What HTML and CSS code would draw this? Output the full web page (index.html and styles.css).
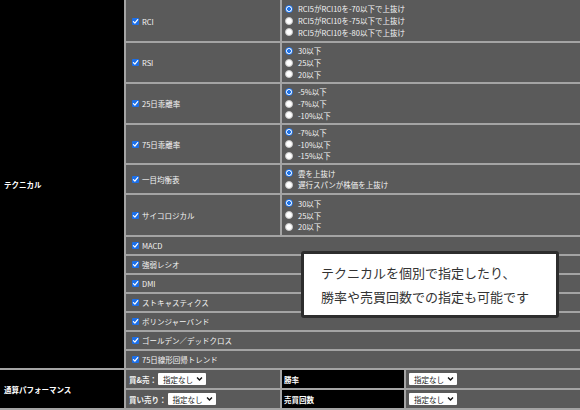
FILE: index.html
```html
<!DOCTYPE html>
<html lang="ja">
<head>
<meta charset="utf-8">
<link rel="stylesheet" href="styles.css">
</head>
<body>
<div class="page">
  <div class="grid">
    <div class="head tech-head">テクニカル</div>

    <div class="mid r1"><span class="cb"><svg viewBox="0 0 8 8"><path d="M1.6 4.2 L3.3 5.9 L6.5 1.8"/></svg></span>RCI</div>
    <div class="opts"><div class="opt"><span class="rd on"></span>RCI5がRCI10を-70以下で上抜け</div><div class="opt"><span class="rd"></span>RCI5がRCI10を-75以下で上抜け</div><div class="opt"><span class="rd"></span>RCI5がRCI10を-80以下で上抜け</div></div>

    <div class="mid"><span class="cb"><svg viewBox="0 0 8 8"><path d="M1.6 4.2 L3.3 5.9 L6.5 1.8"/></svg></span>RSI</div>
    <div class="opts"><div class="opt"><span class="rd on"></span>30以下</div><div class="opt"><span class="rd"></span>25以下</div><div class="opt"><span class="rd"></span>20以下</div></div>

    <div class="mid"><span class="cb"><svg viewBox="0 0 8 8"><path d="M1.6 4.2 L3.3 5.9 L6.5 1.8"/></svg></span>25日乖離率</div>
    <div class="opts"><div class="opt"><span class="rd on"></span>-5%以下</div><div class="opt"><span class="rd"></span>-7%以下</div><div class="opt"><span class="rd"></span>-10%以下</div></div>

    <div class="mid"><span class="cb"><svg viewBox="0 0 8 8"><path d="M1.6 4.2 L3.3 5.9 L6.5 1.8"/></svg></span>75日乖離率</div>
    <div class="opts"><div class="opt"><span class="rd on"></span>-7%以下</div><div class="opt"><span class="rd"></span>-10%以下</div><div class="opt"><span class="rd"></span>-15%以下</div></div>

    <div class="mid"><span class="cb"><svg viewBox="0 0 8 8"><path d="M1.6 4.2 L3.3 5.9 L6.5 1.8"/></svg></span>一目均衡表</div>
    <div class="opts"><div class="opt"><span class="rd on"></span>雲を上抜け</div><div class="opt"><span class="rd"></span>遅行スパンが株価を上抜け</div></div>

    <div class="mid"><span class="cb"><svg viewBox="0 0 8 8"><path d="M1.6 4.2 L3.3 5.9 L6.5 1.8"/></svg></span>サイコロジカル</div>
    <div class="opts"><div class="opt"><span class="rd on"></span>30以下</div><div class="opt"><span class="rd"></span>25以下</div><div class="opt"><span class="rd"></span>20以下</div></div>

    <div class="mid wide"><span class="cb"><svg viewBox="0 0 8 8"><path d="M1.6 4.2 L3.3 5.9 L6.5 1.8"/></svg></span>MACD</div>
    <div class="mid wide"><span class="cb"><svg viewBox="0 0 8 8"><path d="M1.6 4.2 L3.3 5.9 L6.5 1.8"/></svg></span>強弱レシオ</div>
    <div class="mid wide"><span class="cb"><svg viewBox="0 0 8 8"><path d="M1.6 4.2 L3.3 5.9 L6.5 1.8"/></svg></span>DMI</div>
    <div class="mid wide"><span class="cb"><svg viewBox="0 0 8 8"><path d="M1.6 4.2 L3.3 5.9 L6.5 1.8"/></svg></span>ストキャスティクス</div>
    <div class="mid wide"><span class="cb"><svg viewBox="0 0 8 8"><path d="M1.6 4.2 L3.3 5.9 L6.5 1.8"/></svg></span>ボリンジャーバンド</div>
    <div class="mid wide"><span class="cb"><svg viewBox="0 0 8 8"><path d="M1.6 4.2 L3.3 5.9 L6.5 1.8"/></svg></span>ゴールデン／デッドクロス</div>
    <div class="mid wide"><span class="cb"><svg viewBox="0 0 8 8"><path d="M1.6 4.2 L3.3 5.9 L6.5 1.8"/></svg></span>75日線形回帰トレンド</div>

    <div class="head perf-head">通算パフォーマンス</div>
    <div class="mid sel-cell">買&amp;売：<span class="sel">指定なし<svg viewBox="0 0 8 6"><path d="M1.2 1.4 L4 4.2 L6.8 1.4"/></svg></span></div>
    <div class="head sub-head">勝率</div>
    <div class="mid val-cell"><span class="sel">指定なし<svg viewBox="0 0 8 6"><path d="M1.2 1.4 L4 4.2 L6.8 1.4"/></svg></span></div>

    <div class="mid sel-cell">買い売り：<span class="sel">指定なし<svg viewBox="0 0 8 6"><path d="M1.2 1.4 L4 4.2 L6.8 1.4"/></svg></span></div>
    <div class="head sub-head">売買回数</div>
    <div class="mid val-cell"><span class="sel">指定なし<svg viewBox="0 0 8 6"><path d="M1.2 1.4 L4 4.2 L6.8 1.4"/></svg></span></div>
  </div>

  <div class="callout">
    <p>テクニカルを個別で指定したり、</p>
    <p>勝率や売買回数での指定も可能です</p>
  </div>
</div>
</body>
</html>
```

FILE: styles.css
```css
* { box-sizing: border-box; }
html, body { margin: 0; padding: 0; }
body {
  width: 580px;
  height: 410px;
  overflow: hidden;
  background: #a4a4a4;
  font-family: "Noto Sans CJK JP", "Noto Sans", sans-serif;
}
.page { position: relative; width: 580px; height: 410px; }

.grid {
  display: grid;
  grid-template-columns: 124px 154px 122px 1fr;
  grid-template-rows: 41px 39px 39px 38px 28px 40px repeat(7, 17px) 18px 18px;
  gap: 2px;
  background: #a4a4a4;
  padding-bottom: 2px;
  font-size: 7.5px;
  color: #f4f4f4;
}

.head {
  background: #000;
  color: #fff;
  font-weight: 700;
  display: flex;
  align-items: center;
  padding-left: 4px;
}
.tech-head { grid-column: 1; grid-row: 1 / 14; }
.perf-head { grid-column: 1; grid-row: 14 / 16; }
.sub-head { padding-left: 2px; }

.mid {
  background: #5a5a5a;
  display: flex;
  align-items: center;
  padding-left: 6px;
  white-space: nowrap;
}
.r1 { padding-top: 1px; }
.mid.wide { grid-column: 2 / 5; }

.opts {
  grid-column: 3 / 5;
  background: #5a5a5a;
  display: flex;
  flex-direction: column;
  justify-content: center;
  padding-left: 3px;
}
.opt {
  display: flex;
  align-items: center;
  height: 11.7px;
  white-space: nowrap;
}

.cb {
  width: 7px;
  height: 7px;
  background: #1c6fe8;
  border-radius: 1px;
  margin-right: 3px;
  display: inline-flex;
  flex: none;
}
.cb svg { width: 7px; height: 7px; }
.cb path { fill: none; stroke: #fff; stroke-width: 1.4; stroke-linecap: round; stroke-linejoin: round; }

.rd {
  width: 8px;
  height: 8px;
  border-radius: 50%;
  background: #fff;
  border: 1px solid #c8c8c8;
  margin-right: 5px;
  flex: none;
}
.rd.on {
  border: 1px solid #1f74ea;
  background: radial-gradient(circle, #1f74ea 0 1.8px, #fff 2.2px);
}

.sel-cell { padding-left: 3px; font-weight: 700; }
.val-cell { padding-left: 2px; }
.sel {
  display: inline-flex;
  align-items: center;
  height: 12px;
  background: #fff;
  color: #222;
  font-weight: 400;
  padding: 0 3px 0 5px;
  margin-left: 1px;
  border-radius: 1px;
}
.sel svg { width: 7px; height: 6px; margin-left: 3px; }
.sel path { fill: none; stroke: #111; stroke-width: 1.6; }

.callout {
  position: absolute;
  left: 301px;
  top: 251px;
  width: 258px;
  height: 67px;
  background: #fff;
  border: 3px solid #2d2d2d;
  border-radius: 3px;
  padding: 7px 0 0 17px;
  color: #333;
  font-size: 13px;
  line-height: 24px;
}
.callout p { margin: 0; white-space: nowrap; }
```
